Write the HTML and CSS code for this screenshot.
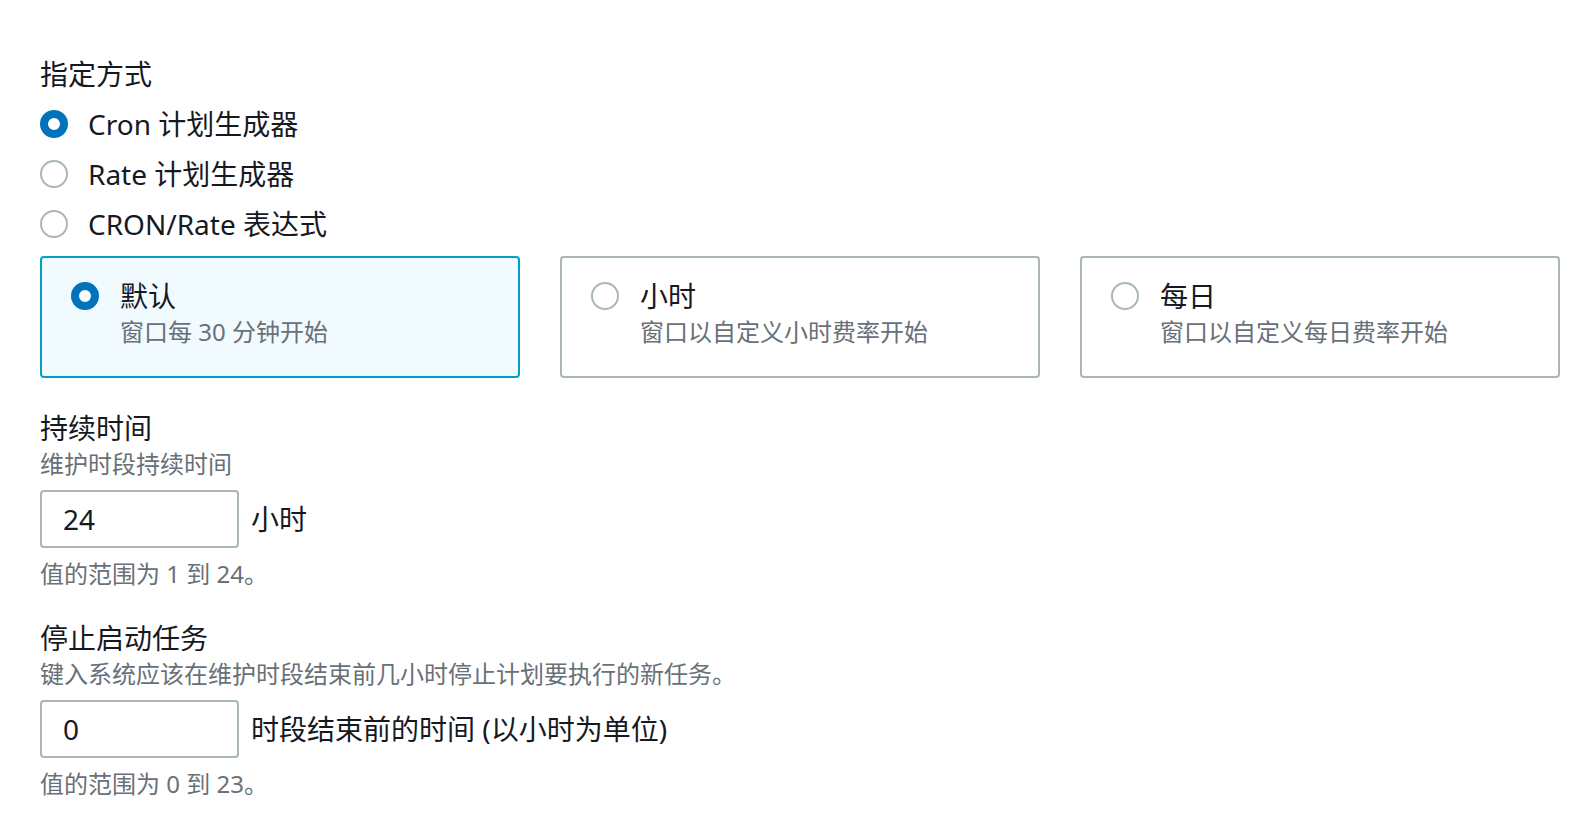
FILE: index.html
```html
<!DOCTYPE html>
<html lang="zh-CN">
<head>
<meta charset="utf-8">
<title>维护时段计划</title>
<link rel="stylesheet" href="styles.css">
</head>
<body>
<div class="page">
  <section class="field">
    <div class="label">指定方式</div>
    <div class="radio-list">
      <div class="radio-row"><span class="radio checked"></span><span class="radio-text">Cron 计划生成器</span></div>
      <div class="radio-row"><span class="radio"></span><span class="radio-text">Rate 计划生成器</span></div>
      <div class="radio-row"><span class="radio"></span><span class="radio-text">CRON/Rate 表达式</span></div>
    </div>
    <div class="tiles">
      <div class="tile selected">
        <span class="radio checked"></span>
        <div class="tile-body">
          <div class="tile-title">默认</div>
          <div class="tile-desc">窗口每 30 分钟开始</div>
        </div>
      </div>
      <div class="tile">
        <span class="radio"></span>
        <div class="tile-body">
          <div class="tile-title">小时</div>
          <div class="tile-desc">窗口以自定义小时费率开始</div>
        </div>
      </div>
      <div class="tile">
        <span class="radio"></span>
        <div class="tile-body">
          <div class="tile-title">每日</div>
          <div class="tile-desc">窗口以自定义每日费率开始</div>
        </div>
      </div>
    </div>
  </section>

  <section class="field field-duration">
    <div class="label">持续时间</div>
    <div class="desc">维护时段持续时间</div>
    <div class="input-row">
      <div class="input">24</div>
      <span class="unit">小时</span>
    </div>
    <div class="help">值的范围为 1 到 24。</div>
  </section>

  <section class="field field-cutoff">
    <div class="label">停止启动任务</div>
    <div class="desc">键入系统应该在维护时段结束前几小时停止计划要执行的新任务。</div>
    <div class="input-row">
      <div class="input">0</div>
      <span class="unit">时段结束前的时间 (以小时为单位)</span>
    </div>
    <div class="help">值的范围为 0 到 23。</div>
  </section>
</div>
</body>
</html>
```

FILE: styles.css
```css
* { box-sizing: border-box; }
html, body { margin: 0; padding: 0; background: #ffffff; }
body {
  font-family: "Noto Sans", "Noto Sans CJK SC", sans-serif;
  color: #16191f;
  font-size: 28px;
}
.page {
  padding: 54px 33px 0 40px;
}
.label {
  font-size: 28px;
  line-height: 40px;
  color: #16191f;
}
.radio-list {
  margin-top: 5px;
  display: flex;
  flex-direction: column;
}
.radio-row {
  height: 50px;
  display: flex;
  align-items: center;
  gap: 20px;
}
.radio-text { font-size: 28px; line-height: 40px; }
.radio {
  flex: none;
  width: 28px;
  height: 28px;
  border-radius: 50%;
  border: 2px solid #aab7b8;
  background: #ffffff;
}
.radio.checked {
  border: 8.5px solid #0073bb;
  background: #ffffff;
}
.tiles {
  margin-top: 7px;
  display: grid;
  grid-template-columns: repeat(3, 1fr);
  gap: 40px;
}
.tile {
  height: 122px;
  border: 2px solid #aab7b8;
  border-radius: 4px;
  padding: 18px 28px 28px 29px;
  display: flex;
  align-items: flex-start;
  gap: 21px;
  background: #ffffff;
}
.tile .radio { margin-top: 6px; }
.tile.selected {
  border-color: #00a1c9;
  background: #f1faff;
}
.tile-title { font-size: 28px; line-height: 40px; color: #16191f; }
.tile-desc { font-size: 24px; line-height: 32px; color: #687078; }
.field-duration { margin-top: 30px; }
.field-cutoff { margin-top: 28px; }
.desc { font-size: 24px; line-height: 32px; color: #687078; }
.input-row {
  margin-top: 10px;
  display: flex;
  align-items: center;
  gap: 12px;
}
.input {
  width: 199px;
  height: 58px;
  border: 2px solid #aab7b8;
  border-radius: 4px;
  padding: 0 0 0 21px;
  display: flex;
  align-items: center;
  font-size: 28px;
  color: #16191f;
  background: #ffffff;
}
.unit { font-size: 28px; line-height: 40px; color: #16191f; }
.help {
  margin-top: 10px;
  font-size: 24px;
  line-height: 32px;
  color: #687078;
}
```
